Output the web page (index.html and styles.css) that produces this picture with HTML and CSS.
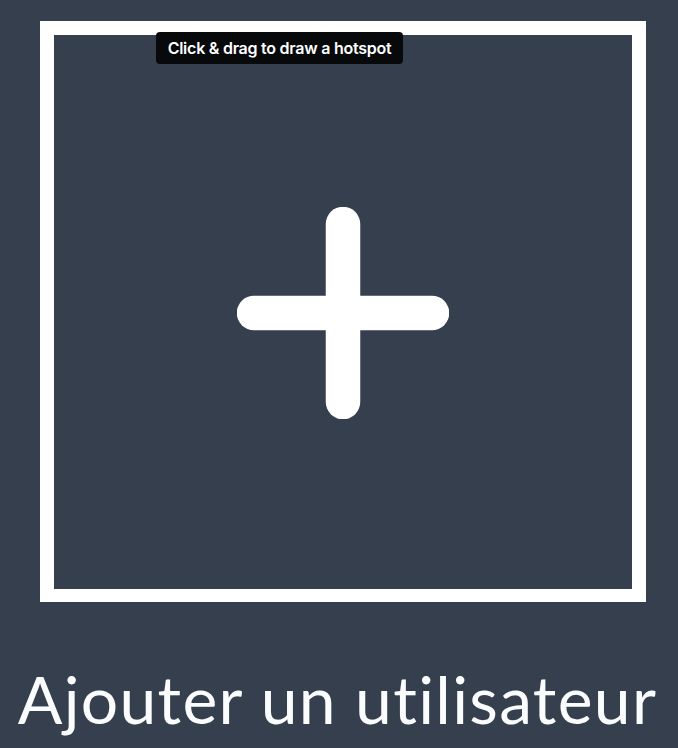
FILE: index.html
```html
<!DOCTYPE html>
<html>
<head>
<meta charset="utf-8">
<link rel="stylesheet" href="styles.css">
</head>
<body>
<div class="page">
  <div class="tile">
    <svg class="plus" width="212" height="212" viewBox="0 0 212 212">
      <line x1="106" y1="17" x2="106" y2="195" stroke="#fff" stroke-width="34.5" stroke-linecap="round"/>
      <line x1="17" y1="106" x2="195" y2="106" stroke="#fff" stroke-width="34.5" stroke-linecap="round"/>
    </svg>
    <div class="tooltip">Click &amp; drag to draw a hotspot</div>
  </div>
  <div class="label">Ajouter un utilisateur</div>
</div>
</body>
</html>
```

FILE: styles.css
```css
html, body {
  margin: 0;
  padding: 0;
  background: #363f4d;
  height: 100%;
  overflow: hidden;
}
.page {
  display: flex;
  flex-direction: column;
  align-items: center;
  padding-top: 21px;
}
.tile {
  position: relative;
  box-sizing: border-box;
  width: 606px;
  height: 581px;
  margin-left: 8px;
  border: 14px solid #ffffff;
  border-bottom-width: 13px;
  display: flex;
  align-items: center;
  justify-content: center;
}
.plus {
  display: block;
  margin-top: 2px;
}
.tooltip {
  position: absolute;
  left: 102px;
  top: -3px;
  height: 32px;
  width: 247px;
  box-sizing: border-box;
  background: #08090b;
  border-radius: 4px;
  color: #fff;
  font-family: Inter, Roboto, "Liberation Sans", sans-serif;
  font-weight: 600;
  font-size: 16px;
  letter-spacing: -0.25px;
  display: flex;
  align-items: center;
  justify-content: center;
}
.label {
  margin-top: 64px;
  margin-right: 3px;
  font-family: Lato, "Open Sans", sans-serif;
  font-size: 66px;
  letter-spacing: 1.3px;
  font-variant-ligatures: none;
  font-feature-settings: "liga" 0;
  color: #fbfcfd;
  line-height: 1;
  white-space: nowrap;
}
```
